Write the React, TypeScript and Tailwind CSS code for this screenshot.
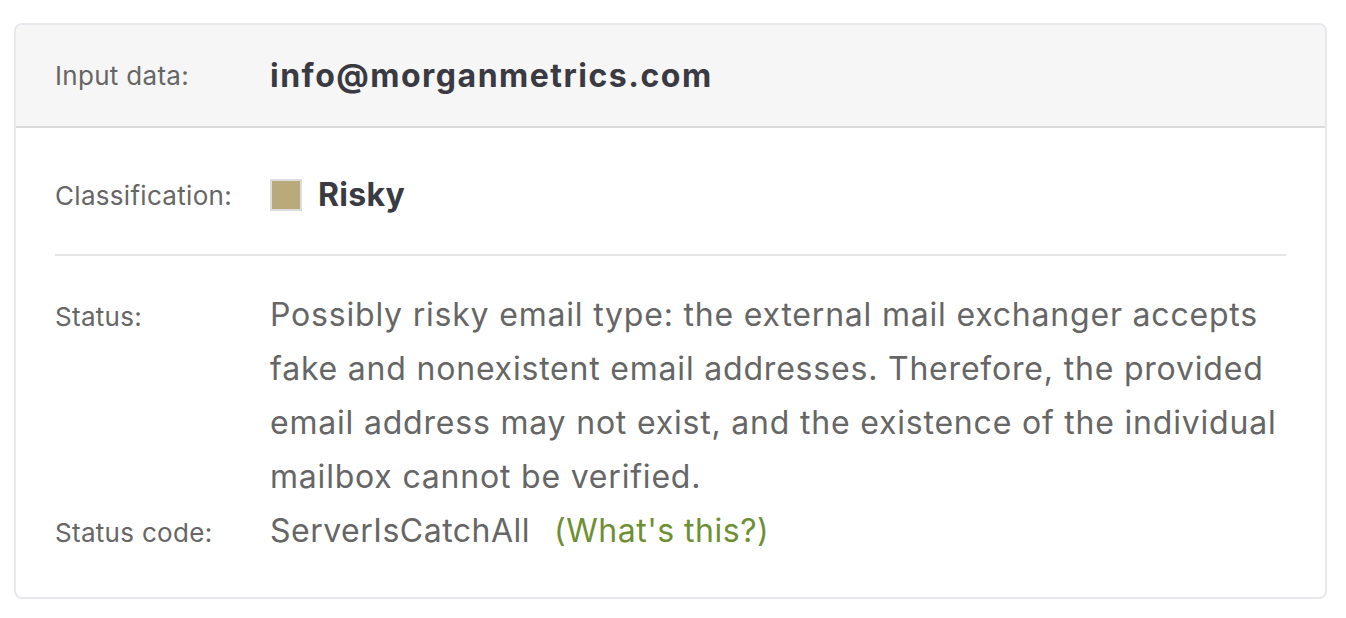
const label = 'w-[215px] shrink-0 text-[26px] tracking-[0.3px] text-[#666]'
const body = 'text-[32px] leading-[54px] tracking-[0.8px] text-[#666]'

export default function App() {
  return (
    <div className="min-h-screen bg-white pl-[14px] pr-[19px] pt-[23px] font-['Inter',sans-serif]">
      <div className="overflow-hidden rounded-lg border-2 border-[#e8e8ec]">
        <div className="flex h-[103px] items-center border-b-2 border-[#dadada] bg-[#f6f6f6] px-[39px]">
          <span className={label}>Input data:</span>
          <span className="text-[32px] font-bold tracking-[1.5px] text-[#3a3a42]">info@morganmetrics.com</span>
        </div>
        <div className="px-[39px] pb-[39px] pt-[40px]">
          <div className="flex h-[54px] items-center">
            <span className={label}>Classification:</span>
            <span className="h-8 w-8 border-2 border-[#dcdcdc] bg-[#b8aa7a]" />
            <span className="ml-4 text-[32px] font-bold tracking-[0.3px] text-[#3a3a42]">Risky</span>
          </div>
          <div className="mt-8 h-0.5 bg-[#e6e6e6]" />
          <div className="mt-8 flex items-baseline">
            <span className={label}>Status:</span>
            <p className={body}>
              Possibly risky email type: the external mail exchanger accepts fake and nonexistent email addresses. Therefore, the provided email address may not exist, and the existence of the individual mailbox cannot be verified.
            </p>
          </div>
          <div className="flex items-baseline">
            <span className={label}>Status code:</span>
            <span className="text-[32px] leading-[54px] tracking-[0.5px] text-[#666]">ServerIsCatchAll</span>
            <a href="#" className="ml-[24px] text-[32px] leading-[54px] tracking-[0.5px] text-[#6f8f34]">(What's this?)</a>
          </div>
        </div>
      </div>
    </div>
  )
}
